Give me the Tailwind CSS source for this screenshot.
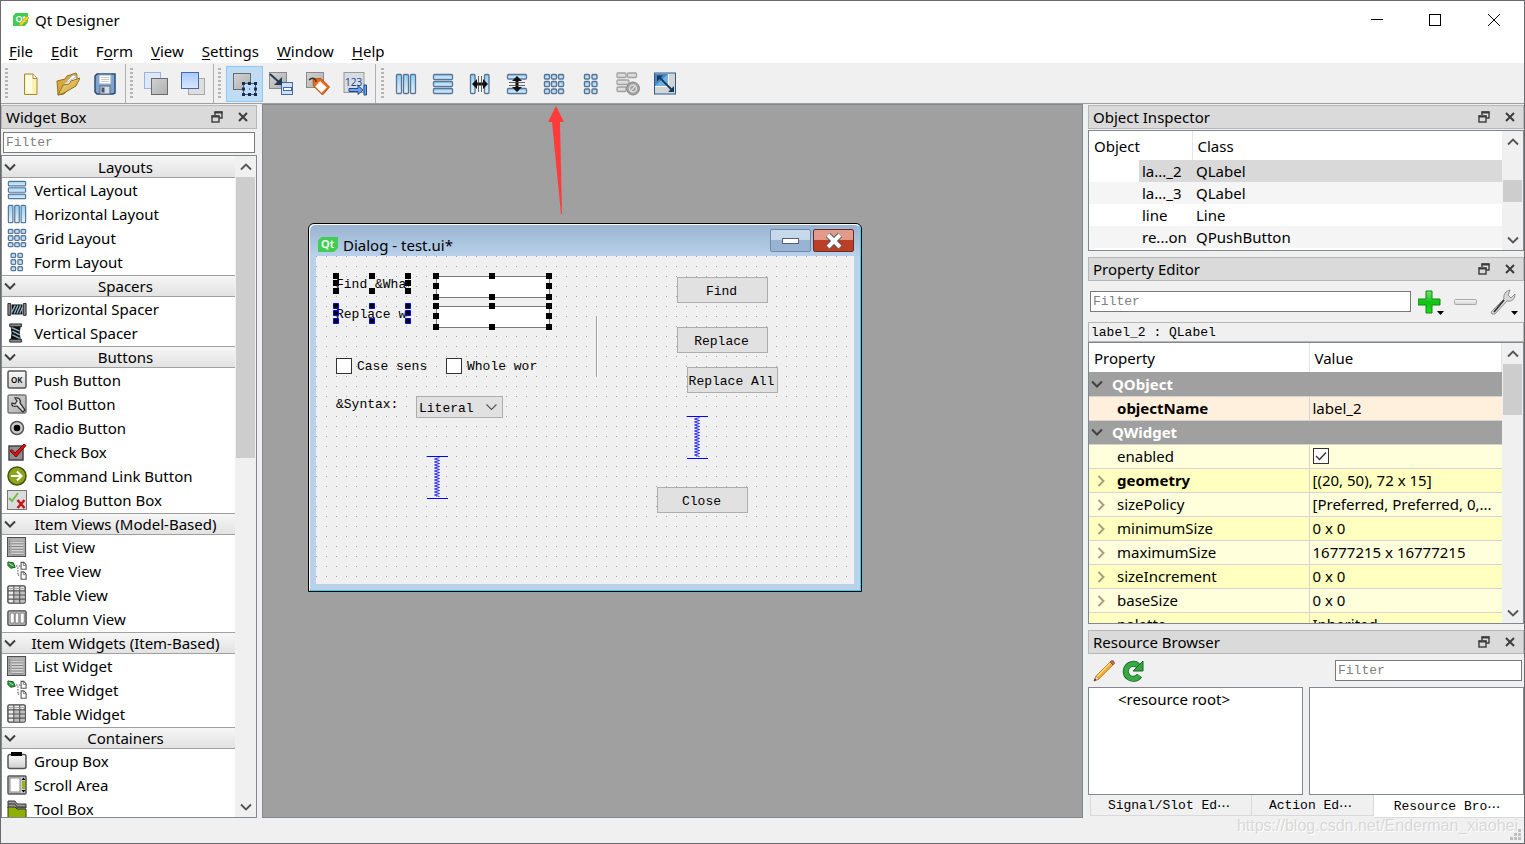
<!DOCTYPE html>
<html lang="en">
<head>
<meta charset="utf-8">
<title>Qt Designer</title>
<script src="https://cdn.jsdelivr.net/npm/@tailwindcss/browser@4"></script>
</head>
<body class="h-screen overflow-hidden bg-[#f0f0f0] font-['Noto_Sans',sans-serif] text-[15px] leading-5 text-black">

<!-- Shared icon symbols -->
<svg width="0" height="0" class="absolute" aria-hidden="true">
  <defs>
    <linearGradient id="gBlue" x1="0" y1="0" x2="0" y2="1"><stop offset="0" stop-color="#8fd0f5"/><stop offset="1" stop-color="#e4f3fd"/></linearGradient>
    <linearGradient id="gBlueD" x1="0" y1="0" x2="0" y2="1"><stop offset="0" stop-color="#a9c8fa"/><stop offset="1" stop-color="#d8e7ff"/></linearGradient>
    <linearGradient id="gGray" x1="0" y1="0" x2="1" y2="1"><stop offset="0" stop-color="#d2d2d2"/><stop offset="1" stop-color="#b0b0b0"/></linearGradient>
    <linearGradient id="gBtn" x1="0" y1="0" x2="0" y2="1"><stop offset="0" stop-color="#fafafa"/><stop offset="1" stop-color="#cfcfcf"/></linearGradient>
    <linearGradient id="gGreen" x1="0" y1="0" x2="0" y2="1"><stop offset="0" stop-color="#7be07b"/><stop offset=".5" stop-color="#12c212"/><stop offset="1" stop-color="#18e018"/></linearGradient>
    <linearGradient id="gGold" x1="0" y1="0" x2="1" y2="1"><stop offset="0" stop-color="#f7e08c"/><stop offset="1" stop-color="#c8962c"/></linearGradient>

    <symbol id="vbox" viewBox="0 0 22 22"><g fill="url(#gBlue)" stroke="#5a7396" stroke-width="1.3"><rect x="1.5" y="1.5" width="19" height="5" rx="1"/><rect x="1.5" y="8.5" width="19" height="5" rx="1"/><rect x="1.5" y="15.5" width="19" height="5" rx="1"/></g></symbol>
    <symbol id="hbox" viewBox="0 0 22 22"><g fill="url(#gBlue)" stroke="#5a7396" stroke-width="1.3"><rect x="1.5" y="1.5" width="5" height="19" rx="1"/><rect x="8.5" y="1.5" width="5" height="19" rx="1"/><rect x="15.5" y="1.5" width="5" height="19" rx="1"/></g></symbol>
    <symbol id="grid" viewBox="0 0 22 22"><g fill="url(#gBlue)" stroke="#5a7396" stroke-width="1.4"><rect x="1.5" y="1.5" width="5" height="4.500" rx="1"/><rect x="8.5" y="1.5" width="5" height="4.500" rx="1"/><rect x="15.5" y="1.5" width="5" height="4.500" rx="1"/><rect x="1.500" y="8.5" width="5" height="5" rx="1"/><rect x="8.5" y="8.5" width="5" height="5" rx="1"/><rect x="15.5" y="8.5" width="5" height="5" rx="1"/><rect x="1.5" y="16" width="5" height="4.500" rx="1"/><rect x="8.5" y="16" width="5" height="4.500" rx="1"/><rect x="15.5" y="16" width="5" height="4.500" rx="1"/></g></symbol>
    <symbol id="form" viewBox="0 0 22 22"><g fill="url(#gBlue)" stroke="#5a7396" stroke-width="1.4"><rect x="4.500" y="1.5" width="5" height="4.500" rx="1"/><rect x="12" y="1.5" width="5" height="4.500" rx="1"/><rect x="4.500" y="8.5" width="5" height="5" rx="1"/><rect x="12" y="8.5" width="5" height="5" rx="1"/><rect x="4.500" y="16" width="5" height="4.500" rx="1"/><rect x="12" y="16" width="5" height="4.500" rx="1"/></g></symbol>
    <symbol id="chev" viewBox="0 0 12 8"><path d="M1 1.500L6 6.500L11 1.500" fill="none" stroke="#404040" stroke-width="2"/></symbol>
    <symbol id="up" viewBox="0 0 12 8"><path d="M1 6.500L6 1.500L11 6.500" fill="none" stroke="#555" stroke-width="1.900"/></symbol>
    <symbol id="right" viewBox="0 0 8 12"><path d="M1.500 1L6.500 6L1.500 11" fill="none" stroke="#a0a082" stroke-width="1.900"/></symbol>
    <symbol id="float" viewBox="0 0 12 12"><path d="M4 4V1h7v6H8" fill="none" stroke="#3c3c3c" stroke-width="1.400"/><path d="M3.500 1.500h8" stroke="#3c3c3c" stroke-width="2"/><rect x="1" y="5" width="7" height="6" fill="#dadada" stroke="#3c3c3c" stroke-width="1.400"/><path d="M.5 5.500h8" stroke="#3c3c3c" stroke-width="2"/></symbol>
    <symbol id="x" viewBox="0 0 10 10"><path d="M1 1l8 8M9 1l-8 8" stroke="#3c3c3c" stroke-width="2"/></symbol>
    <symbol id="list" viewBox="0 0 22 22"><rect x=".5" y=".5" width="20" height="21" fill="#a8a8a8" stroke="#444"/><rect x="5" y="3" width="13" height="17" fill="#d4d4d4"/><path d="M5 4.500h13M5 7.500h13M5 10.500h13M5 13.500h13M5 16.500h13M5 19.500h13" stroke="#777"/><path d="M2 4.500h1M2 7.500h1M2 10.500h1M2 13.500h1M2 16.500h1" stroke="#444"/></symbol>
    <symbol id="tree" viewBox="0 0 22 22"><path d="M1 1l6 1 2 5-5 1-3-3z" fill="#2c9c3c" stroke="#154d1d"/><path d="M2 2.500l5 3" stroke="#b6e8b6"/><path d="M10 5.500h5M12 7v8M12 15.500h3" stroke="#333" stroke-dasharray="1.500 1.500"/><path d="M15.500 1.500h3l2.500 2.500V9h-5.500zM15.500 12h3l2.500 2.500V20h-5.500z" fill="#fff" stroke="#555" stroke-width="1.200"/><path d="M18 2v3h3M18 12v3h3" fill="none" stroke="#777"/></symbol>
    <symbol id="table" viewBox="0 0 22 22"><rect x="1" y="1" width="19" height="19" rx="1.500" fill="#eaeaea" stroke="#444" stroke-width="1.500"/><path d="M7.500 7h12v12h-12z" fill="#c0c0c0"/><path d="M1 6.500h19M1 11h19M1 15.500h19M7.500 1v19M14 1v19" stroke="#555" stroke-width="1.200"/><path d="M2 4h17" stroke="#999"/></symbol>
    <symbol id="column" viewBox="0 0 22 22"><rect x="1" y="2" width="20" height="16" rx="1.500" fill="#c4c4c4" stroke="#4a4a4a" stroke-width="1.500"/><path d="M3.500 4.500h4.500v11H3.500zM9 4.500h4v11H9zM14.500 4.500h4.500v11h-4.500z" fill="#fff" stroke="#777"/></symbol>
    <symbol id="vspring" viewBox="0 0 21 43"><path d="M0 .5h21M0 42.500h21" stroke="#00f"/><path d="M7.500 3l5-1.500M7.500 3l5 1.500M7.500 6l5-1.500M7.500 6l5 1.500M7.500 9l5-1.500M7.500 9l5 1.500M7.500 12l5-1.500M7.500 12l5 1.500M7.500 15l5-1.500M7.500 15l5 1.500M7.500 18l5-1.500M7.500 18l5 1.500M7.500 21l5-1.500M7.500 21l5 1.500M7.500 24l5-1.500M7.500 24l5 1.500M7.500 27l5-1.500M7.500 27l5 1.500M7.500 30l5-1.500M7.500 30l5 1.500M7.500 33l5-1.500M7.500 33l5 1.500M7.500 36l5-1.500M7.500 36l5 1.500M7.500 39l5-1.500M7.500 39l5 1.500" stroke="#00f" stroke-width=".8"/></symbol>
  </defs>
</svg>

<div class="flex h-full flex-col border border-[#6a6a6e]">

  <!-- Title bar -->
  <header class="flex h-[37px] shrink-0 items-center bg-white pl-[11px]">
    <svg class="h-4 w-[17px]" viewBox="0 0 17 16"><path d="M3.500 1H16v9l-3 4H1V4z" fill="#41cd52"/><text x="3.500" y="10" font-family="Noto Sans" font-size="9" font-weight="600" fill="#fff">Qt</text><path d="M7 14l1-3 7-7 2 2-7 7z" fill="#f4cf2a" stroke="#c9a51c" stroke-width=".6"/></svg>
    <h1 class="ml-1.5 flex-1">Qt Designer</h1>
    <button class="grid h-9 w-[58px] place-items-center" aria-label="Minimize"><svg class="size-3" viewBox="0 0 12 12"><path d="M0 5.500h12" stroke="#000"/></svg></button>
    <button class="grid h-9 w-[58px] place-items-center" aria-label="Maximize"><svg class="size-3" viewBox="0 0 12 12"><rect x=".5" y=".5" width="11" height="11" fill="none" stroke="#000"/></svg></button>
    <button class="grid h-9 w-[60px] place-items-center" aria-label="Close"><svg class="size-3" viewBox="0 0 12 12"><path d="M0 0l12 12M12 0L0 12" stroke="#000"/></svg></button>
  </header>

  <!-- Menu bar -->
  <nav class="flex h-[26px] shrink-0 items-center gap-[18px] border-b border-[#f0f0f0] bg-white pl-2">
    <button><u class="underline-offset-2">F</u>ile</button>
    <button><u class="underline-offset-2">E</u>dit</button>
    <button>F<u class="underline-offset-2">o</u>rm</button>
    <button><u class="underline-offset-2">V</u>iew</button>
    <button><u class="underline-offset-2">S</u>ettings</button>
    <button><u class="underline-offset-2">W</u>indow</button>
    <button><u class="underline-offset-2">H</u>elp</button>
  </nav>

  <!-- Tool bars -->
  <div class="flex h-[40px] shrink-0 border-b border-[#a0a0a0]" role="toolbar">
    <div class="flex items-center border-r border-[#b0b0b0] pr-0.5 pl-1">
      <span class="mr-1 h-8 w-[3px] bg-[repeating-linear-gradient(to_bottom,#b4b4b4_0_2px,transparent_2px_4px)]"></span>
      <button class="grid h-9 w-[37px] place-items-center" aria-label="New"><svg class="size-6" viewBox="0 0 24 24"><path d="M5.500 2h8.500l4 4v16.500H5.500z" fill="#fdf3b0" stroke="#a38b3a"/><path d="M7 3.500h6v17H7z" fill="#fffce4"/><path d="M14 2v4.500h4" fill="#fff" stroke="#a38b3a"/></svg></button>
      <button class="grid h-9 w-[37px] place-items-center" aria-label="Open"><svg class="size-6" viewBox="0 0 24 24"><path d="M1 9l8-2 2-3 9-3 1 2v6L8 22l-6 1z" fill="#d8a93c" stroke="#93701d"/><path d="M6 14L17 3l3 1 1 5-10 8z" fill="#fff" stroke="#b5b5b5"/><path d="M8 12L20 5" stroke="#bbb"/><path d="M2 23l5-10 6-1 2-3 9-3-4 8L8 21z" fill="url(#gGold)" stroke="#93701d"/></svg></button>
      <button class="grid h-9 w-[37px] place-items-center" aria-label="Save"><svg class="size-6" viewBox="0 0 24 24"><path d="M4 2h18v19l-2 1H4L2 20V4z" fill="#7ea5cf" stroke="#294c73" stroke-width="1.500"/><rect x="6" y="3" width="12" height="9" fill="#fff" stroke="#9ab"/><path d="M8 5.500h8M8 7.500h8M8 9.500h8" stroke="#c8ccd2"/><rect x="7" y="14" width="10" height="8" fill="#d9dde1" stroke="#506a86"/><rect x="8.500" y="15.500" width="3" height="5" fill="#47566a"/></svg></button>
    </div>
    <div class="flex items-center border-r border-[#b0b0b0] pr-0.5 pl-1">
      <span class="mr-1 h-8 w-[3px] bg-[repeating-linear-gradient(to_bottom,#b4b4b4_0_2px,transparent_2px_4px)]"></span>
      <button class="grid h-9 w-[37px] place-items-center" aria-label="Send to back"><svg class="size-6" viewBox="0 0 24 24"><rect x=".5" y=".5" width="16" height="16" fill="#dce8fb" stroke="#9db4d8"/><rect x="7.500" y="6.500" width="16" height="16" fill="url(#gGray)" stroke="#6a6a6a"/></svg></button>
      <button class="grid h-9 w-[37px] place-items-center" aria-label="Bring to front"><svg class="size-6" viewBox="0 0 24 24"><rect x="7.500" y="6.500" width="16" height="16" fill="#dedede" stroke="#a8a8a8"/><rect x=".5" y=".5" width="17" height="16" fill="url(#gBlueD)" stroke="#4668a4"/></svg></button>
    </div>
    <div class="flex items-center border-r border-[#b0b0b0] pr-0.5 pl-1">
      <span class="mr-[5px] h-8 w-[3px] bg-[repeating-linear-gradient(to_bottom,#b4b4b4_0_2px,transparent_2px_4px)]"></span>
      <button class="grid h-9 w-[37px] place-items-center border border-[#90c8f6] bg-[#c0dcf3]" aria-label="Edit widgets" aria-pressed="true"><svg class="size-6" viewBox="0 0 24 24"><rect x=".5" y="1.500" width="17" height="16" fill="url(#gGray)" stroke="#6a6a6a"/><rect x="10.500" y="11.500" width="12" height="11" fill="#c3dbfa" stroke="#3a6196"/><path d="M9 10h3v3H9zM15 10h3v3h-3zM21 10h3v3h-3zM9 15.500h3v3H9zM21 15.500h3v3h-3zM9 21h3v3H9zM15 21h3v3h-3zM21 21h3v3h-3z" fill="#1c2c4c"/><path d="M16 16.500h1v1h-1z" fill="#1c2c4c"/></svg></button>
      <button class="grid h-9 w-9 place-items-center" aria-label="Edit signals and slots"><svg class="size-6" viewBox="0 0 24 24"><rect x=".5" y=".5" width="17" height="16" fill="url(#gGray)" stroke="#8a8a8a"/><rect x="12.500" y="10.500" width="11" height="12" fill="#cfe0fb" stroke="#4668a4"/><rect x="14.500" y="15.500" width="8" height="3" fill="#fff" stroke="#3d69b5"/><path d="M1 2l10 9" stroke="#233c55" stroke-width="2"/><path d="M13 5v8H5z" fill="#233c55"/></svg></button>
      <button class="grid h-9 w-[37px] place-items-center" aria-label="Edit buddies"><svg class="size-6" viewBox="0 0 24 24"><rect x=".5" y=".5" width="17" height="15" fill="url(#gGray)" stroke="#8a8a8a"/><path d="M7 7l8-.5 8.500 8.500-7 8-9-9z" fill="#e76b1f" stroke="#b64d10"/><path d="M14 9.500l6.500 6-5 5-6-6z" fill="#fff" stroke="#fbd6b8"/><path d="M3 8c3-3 7-2 7 2" fill="none" stroke="#333" stroke-width="1.300"/></svg></button>
      <button class="grid h-9 w-[37px] place-items-center" aria-label="Edit tab order"><svg class="size-6" viewBox="0 0 24 24"><rect x="1" y=".5" width="20" height="20" fill="#d9dce0" stroke="#9a9a9a"/><text x="2" y="14" font-family="Noto Sans" font-size="10" fill="#1c4c93">123</text><path d="M6 16.500h9v-3l5 4.500-5 4.500v-3H6z" fill="#6fa3e6" stroke="#1e4b8c"/><path d="M21 13h2.500v10H21z" fill="#6fa3e6" stroke="#1e4b8c"/></svg></button>
    </div>
    <div class="flex items-center pl-[5px]">
      <span class="mr-[3px] h-8 w-[3px] bg-[repeating-linear-gradient(to_bottom,#b4b4b4_0_2px,transparent_2px_4px)]"></span>
      <button class="grid h-9 w-[37px] place-items-center" aria-label="Lay out horizontally"><svg class="size-[22px]"><use href="#hbox"/></svg></button>
      <button class="grid h-9 w-[37px] place-items-center" aria-label="Lay out vertically"><svg class="size-[22px]"><use href="#vbox"/></svg></button>
      <button class="grid h-9 w-[37px] place-items-center" aria-label="Horizontal splitter"><svg class="size-[22px]" viewBox="0 0 22 22"><g fill="url(#gBlue)" stroke="#5a7396" stroke-width="1.300"><rect x="1.500" y="1.500" width="4.500" height="19" rx="1"/><rect x="15.500" y="1.500" width="4.500" height="19" rx="1"/></g><path d="M3 11l5-5v3.500h6V6l5 5-5 5v-3.500H8V16z" fill="#111"/><path d="M9.500 3v16M12.500 3v16" stroke="#444" stroke-width=".8"/></svg></button>
      <button class="grid h-9 w-[37px] place-items-center" aria-label="Vertical splitter"><svg class="size-[22px]" viewBox="0 0 22 22"><g fill="url(#gBlue)" stroke="#5a7396" stroke-width="1.300"><rect x="1.500" y="1.500" width="19" height="4.500" rx="1"/><rect x="1.500" y="15.500" width="19" height="5" rx="1"/></g><path d="M11 3l5 5h-3.500v6H16l-5 5-5-5h3.500V8H6z" fill="#111"/><path d="M3 9.500h16M3 12.500h16" stroke="#444" stroke-width=".8"/></svg></button>
      <button class="grid h-9 w-[37px] place-items-center" aria-label="Lay out in a grid"><svg class="size-[22px]"><use href="#grid"/></svg></button>
      <button class="grid h-9 w-[37px] place-items-center" aria-label="Lay out in a form"><svg class="size-[22px]"><use href="#form"/></svg></button>
      <button class="grid h-9 w-[37px] place-items-center" aria-label="Break layout"><svg class="size-6" viewBox="0 0 24 24"><g fill="#ddd" stroke="#a0a0a0" stroke-width="1.300"><rect x="1" y="1" width="9" height="4.500" rx="1"/><rect x="11.500" y="1" width="9" height="4.500" rx="1"/><rect x="1" y="8" width="12" height="4.500" rx="1"/><rect x="1" y="15" width="9" height="4.500" rx="1"/></g><circle cx="17" cy="16.500" r="6.500" fill="#a0a0a0" stroke="#8a8a8a"/><circle cx="17" cy="16.500" r="3.500" fill="none" stroke="#dadada" stroke-width="1.500"/><path d="M14.500 19l5-5" stroke="#dadada" stroke-width="1.500"/></svg></button>
      <button class="grid h-9 w-[37px] place-items-center" aria-label="Adjust size"><svg class="size-6" viewBox="0 0 24 24"><rect x="1.500" y="1" width="21" height="21" fill="#d4d4d4" stroke="#2d5c8e"/><rect x="2" y="2" width="13" height="12" fill="#6fb3e0"/><path d="M2 2h13L2 14z" fill="#4a86c4"/><path d="M15.500 2v12.500H2" fill="none" stroke="#f4f4f4"/><path d="M6 5l13 13" stroke="#163a5c" stroke-width="1.800"/><path d="M4 3.500h6l-6 6zM21 20h-6l6-6z" fill="#163a5c"/></svg></button>
    </div>
  </div>

  <!-- Work area -->
  <main class="flex min-h-0 flex-1">

    <!-- Widget box -->
    <aside class="flex w-64 shrink-0 flex-col pt-px">
      <div class="flex h-6 shrink-0 items-center border border-[#b6b6b6] bg-[#dadada] pr-2 pl-1">
        <h2 class="flex-1">Widget Box</h2>
        <button aria-label="Float"><svg class="size-3"><use href="#float"/></svg></button>
        <button class="ml-[15px]" aria-label="Close"><svg class="size-2.5"><use href="#x"/></svg></button>
      </div>
      <input type="text" aria-label="Filter widgets" placeholder="Filter" class="mx-0.5 mt-[3px] h-[21px] shrink-0 border border-[#7a7a7a] bg-white px-0.5 font-['Liberation_Mono',monospace] text-[13px] placeholder-[#808080]">
      <div class="mt-0.5 flex min-h-0 flex-1 border border-[#828790] bg-white">
        <div class="min-w-0 flex-1 overflow-hidden">
          <section class="pb-px">
            <h3 class="flex h-[22px] items-center border-b border-[#a0a0a0] bg-linear-to-b from-[#f6f6f6] to-[#e2e2e2] pl-0.5"><svg class="h-2 w-3"><use href="#chev"/></svg><span class="flex-1 text-center">Layouts</span></h3>
            <ul>
              <li class="flex h-6 items-center gap-[7px] pl-[5px]"><svg class="size-5"><use href="#vbox"/></svg>Vertical Layout</li>
              <li class="flex h-6 items-center gap-[7px] pl-[5px]"><svg class="size-5"><use href="#hbox"/></svg>Horizontal Layout</li>
              <li class="flex h-6 items-center gap-[7px] pl-[5px]"><svg class="size-5"><use href="#grid"/></svg>Grid Layout</li>
              <li class="flex h-6 items-center gap-[7px] pl-[5px]"><svg class="size-5"><use href="#form"/></svg>Form Layout</li>
            </ul>
          </section>
          <section class="pb-px">
            <h3 class="flex h-[22px] items-center border-y border-[#a0a0a0] bg-linear-to-b from-[#f6f6f6] to-[#e2e2e2] pl-0.5"><svg class="h-2 w-3"><use href="#chev"/></svg><span class="flex-1 text-center">Spacers</span></h3>
            <ul>
              <li class="flex h-6 items-center gap-[7px] pl-[5px]"><svg class="size-5" viewBox="0 0 22 22"><path d="M1 5h3v13H1zM18 5h3v13h-3z" fill="#888" stroke="#222"/><path d="M5 6h12v11H5z" fill="#111"/><path d="M5 15l4-8M8 16l4-9M11 16l4-9M14 16l3-7" stroke="#8fb6c8" stroke-width="1.500"/></svg>Horizontal Spacer</li>
              <li class="flex h-6 items-center gap-[7px] pl-[5px]"><svg class="size-5" viewBox="0 0 22 22"><path d="M3 1h13v3H3zM3 18h13v3H3z" fill="#888" stroke="#222"/><path d="M4 4h11l-1 7 1 7H4l1-7z" fill="#111"/><path d="M5 5l9 4M6 9l8 4M6 13l8 4" stroke="#8fb6c8" stroke-width="1.500"/></svg>Vertical Spacer</li>
            </ul>
          </section>
          <section class="pb-px">
            <h3 class="flex h-[22px] items-center border-y border-[#a0a0a0] bg-linear-to-b from-[#f6f6f6] to-[#e2e2e2] pl-0.5"><svg class="h-2 w-3"><use href="#chev"/></svg><span class="flex-1 text-center">Buttons</span></h3>
            <ul>
              <li class="flex h-6 items-center gap-[7px] pl-[5px]"><svg class="size-5" viewBox="0 0 20 20"><rect x="1" y="1" width="18" height="17" rx="1.500" fill="url(#gBtn)" stroke="#555" stroke-width="1.500"/><text x="4" y="12.500" font-family="Noto Sans" font-size="8" font-weight="600">OK</text></svg>Push Button</li>
              <li class="flex h-6 items-center gap-[7px] pl-[5px]"><svg class="size-5" viewBox="0 0 20 20"><rect x="1" y="1" width="18" height="18" rx="1.500" fill="url(#gGray)" stroke="#777" stroke-width="1.500"/><path d="M8 4c4-1 6 2 5 5l5 7-2 2-6-6c-3 1-6 0-5-3l3 1 2-3z" fill="#ddd" stroke="#333" stroke-width="1.300"/></svg>Tool Button</li>
              <li class="flex h-6 items-center gap-[7px] pl-[5px]"><svg class="size-5" viewBox="0 0 20 20"><circle cx="10" cy="10" r="6.500" fill="#ccc" stroke="#555" stroke-width="1.500"/><circle cx="10" cy="10" r="3.300"/></svg>Radio Button</li>
              <li class="flex h-6 items-center gap-[7px] pl-[5px]"><svg class="size-5" viewBox="0 0 20 20"><rect x="2" y="4" width="14" height="14" fill="#8e8e8e" stroke="#444" stroke-width="1.500"/><path d="M3 9l2-1.500 3 3.500L17 2l2 1.500L9 15z" fill="#d41414" stroke="#7d0a0a"/></svg>Check Box</li>
              <li class="flex h-6 items-center gap-[7px] pl-[5px]"><svg class="size-5" viewBox="0 0 20 20"><circle cx="10" cy="10" r="9" fill="#8aa51d" stroke="#46540d" stroke-width="1.500"/><path d="M4 10h10M10 5.500l4.500 4.500-4.500 4.500" fill="none" stroke="#fff" stroke-width="2"/></svg>Command Link Button</li>
              <li class="flex h-6 items-center gap-[7px] pl-[5px]"><svg class="size-5" viewBox="0 0 20 20"><rect x=".5" y=".5" width="19" height="19" fill="#dcdcdc" stroke="#777"/><path d="M2 8l3 3 6-8" fill="none" stroke="#6cc04a" stroke-width="2"/><path d="M10.500 10l7 8M17.500 10l-7 8" stroke="#c4161c" stroke-width="2.500"/></svg>Dialog Button Box</li>
            </ul>
          </section>
          <section class="pb-px">
            <h3 class="flex h-[22px] items-center border-y border-[#a0a0a0] bg-linear-to-b from-[#f6f6f6] to-[#e2e2e2] pl-0.5"><svg class="h-2 w-3"><use href="#chev"/></svg><span class="flex-1 text-center">Item Views (Model-Based)</span></h3>
            <ul>
              <li class="flex h-6 items-center gap-[7px] pl-[5px]"><svg class="size-5"><use href="#list"/></svg>List View</li>
              <li class="flex h-6 items-center gap-[7px] pl-[5px]"><svg class="size-5"><use href="#tree"/></svg>Tree View</li>
              <li class="flex h-6 items-center gap-[7px] pl-[5px]"><svg class="size-5"><use href="#table"/></svg>Table View</li>
              <li class="flex h-6 items-center gap-[7px] pl-[5px]"><svg class="size-5"><use href="#column"/></svg>Column View</li>
            </ul>
          </section>
          <section class="pb-px">
            <h3 class="flex h-[22px] items-center border-y border-[#a0a0a0] bg-linear-to-b from-[#f6f6f6] to-[#e2e2e2] pl-0.5"><svg class="h-2 w-3"><use href="#chev"/></svg><span class="flex-1 text-center">Item Widgets (Item-Based)</span></h3>
            <ul>
              <li class="flex h-6 items-center gap-[7px] pl-[5px]"><svg class="size-5"><use href="#list"/></svg>List Widget</li>
              <li class="flex h-6 items-center gap-[7px] pl-[5px]"><svg class="size-5"><use href="#tree"/></svg>Tree Widget</li>
              <li class="flex h-6 items-center gap-[7px] pl-[5px]"><svg class="size-5"><use href="#table"/></svg>Table Widget</li>
            </ul>
          </section>
          <section>
            <h3 class="flex h-[22px] items-center border-y border-[#a0a0a0] bg-linear-to-b from-[#f6f6f6] to-[#e2e2e2] pl-0.5"><svg class="h-2 w-3"><use href="#chev"/></svg><span class="flex-1 text-center">Containers</span></h3>
            <ul>
              <li class="flex h-6 items-center gap-[7px] pl-[5px]"><svg class="size-5" viewBox="0 0 20 20"><rect x="1" y="3.500" width="18" height="14" rx="2" fill="url(#gBtn)" stroke="#555" stroke-width="1.500"/><rect x="4" y="1" width="11" height="4" fill="#000"/></svg>Group Box</li>
              <li class="flex h-6 items-center gap-[7px] pl-[5px]"><svg class="size-5" viewBox="0 0 20 20"><rect x="1" y="1" width="18" height="18" rx="1" fill="#ccc" stroke="#555" stroke-width="1.500"/><rect x="3" y="3" width="10" height="14" fill="#fff" stroke="#888"/><rect x="15" y="6" width="3" height="8" fill="#95b800"/><path d="M14.500 5l2-2.500 2 2.500zM14.500 15l2 2.500 2-2.500z"/></svg>Scroll Area</li>
              <li class="flex h-6 items-center gap-[7px] pl-[5px]"><svg class="size-5" viewBox="0 0 20 20"><path d="M1 2h7l2 3h9v4H1z" fill="#999" stroke="#333"/><path d="M1 5h7l2 3h9" fill="none" stroke="#333"/><path d="M1 8h7l2 2h9v10H1z" fill="#8fb000" stroke="#333"/></svg>Tool Box</li>
            </ul>
          </section>
        </div>
        <div class="flex w-[21px] shrink-0 flex-col items-center bg-[#f0f0f0]">
          <span class="grid h-[21px] place-items-center"><svg class="h-2 w-3"><use href="#up"/></svg></span>
          <span class="h-[281px] w-[19px] bg-[#cdcdcd]"></span>
          <span class="mt-auto grid h-[21px] place-items-center"><svg class="h-2 w-3 rotate-180"><use href="#up"/></svg></span>
        </div>
      </div>
    </aside>

    <!-- Form canvas -->
    <div class="relative mx-[5px] min-w-0 flex-1 overflow-hidden border border-[#828790] bg-[#a0a0a0]">
      <svg class="absolute top-px left-[284px] h-[109px] w-[18px]" viewBox="0 0 18 109"><path d="M9 0l8 16h-4l2 92h-1L5 16H1z" fill="#ff3b3b"/></svg>

      <!-- Edited dialog -->
      <div class="absolute top-[118px] left-[45px] flex h-[369px] w-[554px] flex-col rounded-t-md border border-black bg-[#b9d1ea]">
        <div class="flex min-h-0 flex-1 flex-col rounded-t-md border border-t-white border-r-[#2ed3f0] border-b-[#2ed3f0] border-l-white px-1.5 pb-1.5">
          <div class="-mx-1.5 flex h-[31px] shrink-0 items-center rounded-t-md bg-linear-to-b from-[#99b4d1] to-[#b9d1ea] px-1.5">
            <svg class="mt-2 ml-0.5 h-[15px] w-5" viewBox="0 0 20 15"><path d="M3.500 0H20v11l-4 4H0V3.500z" fill="#41cd52"/><text x="3" y="11" font-family="Noto Sans" font-size="11" font-weight="600" fill="#fff">Qt</text></svg>
            <span class="mt-2 ml-[5px] flex-1">Dialog - test.ui*</span>
            <button class="mr-0.5 grid h-[23px] w-[41px] place-items-center rounded-xs border border-[#6d8aab] bg-linear-to-b from-[#c6d8ea] from-45% to-[#98b4d2] to-50%" aria-label="Minimize dialog"><span class="h-1.5 w-[17px] border border-[#555f70] bg-white"></span></button>
            <button class="grid h-[23px] w-[41px] place-items-center rounded-xs border border-[#6c2a22] bg-linear-to-b from-[#e29a8b] from-45% to-[#ba3f26] to-50%" aria-label="Close dialog"><svg class="h-4 w-[18px]" viewBox="0 0 18 16"><path d="M3 2l12 12M15 2L3 14" stroke="#54505c" stroke-width="6"/><path d="M3 2l12 12M15 2L3 14" stroke="#fff" stroke-width="4"/></svg></button>
          </div>
          <div class="relative min-h-0 flex-1 overflow-hidden bg-[#f0f0f0] font-['Liberation_Mono',monospace] text-[13px]">
            <svg class="absolute inset-0 h-full w-full" aria-hidden="true"><defs><pattern id="dots" width="10" height="10" patternUnits="userSpaceOnUse"><rect width="1" height="1" fill="#a0a0a0"/></pattern></defs><rect width="100%" height="100%" fill="url(#dots)"/></svg>

            <label for="find" class="absolute top-[19px] left-5 w-[73px] overflow-hidden whitespace-nowrap">Find &amp;What</label>
            <label for="repl" class="absolute top-[49px] left-5 w-[71px] overflow-hidden whitespace-nowrap">Replace with</label>
            <input id="find" type="text" class="absolute top-5 left-[120px] h-[22px] w-[114px] border border-[#7a7a7a] bg-white">
            <input id="repl" type="text" class="absolute top-[50px] left-[120px] h-[22px] w-[114px] border border-[#7a7a7a] bg-white">
            <svg class="absolute top-4 left-4 h-[58px] w-[222px]" viewBox="0 0 222 58" aria-hidden="true">
              <path d="M1 1h6v6h-6zM37 1h6v6h-6zM73 1h6v6h-6zM1 8h6v6h-6zM73 8h6v6h-6zM1 16h6v6h-6zM37 16h6v6h-6zM73 16h6v6h-6z"/>
              <g fill="#000" stroke="#00f"><path d="M1.500 31.500h5v5h-5zM37.500 31.500h5v5h-5zM73.500 31.500h5v5h-5zM1.500 38.500h5v5h-5zM73.500 38.500h5v5h-5zM1.500 46.500h5v5h-5zM37.500 46.500h5v5h-5zM73.500 46.500h5v5h-5z"/></g>
              <path d="M101 1h6v6h-6zM157 1h6v6h-6zM214 1h6v6h-6zM101 11h6v6h-6zM214 11h6v6h-6zM101 22h6v6h-6zM157 22h6v6h-6zM214 22h6v6h-6z"/>
              <path d="M101 31h6v6h-6zM157 31h6v6h-6zM214 31h6v6h-6zM101 41h6v6h-6zM214 41h6v6h-6zM101 52h6v6h-6zM157 52h6v6h-6zM214 52h6v6h-6z"/>
            </svg>
            <span class="absolute top-[60px] left-[280px] h-[61px] w-0.5 border-r border-l border-r-white border-l-[#a0a0a0]"></span>

            <label class="absolute top-[99px] left-5 flex w-[91px] items-center gap-[5px] overflow-hidden whitespace-nowrap"><input type="checkbox" class="size-4 shrink-0 appearance-none border border-[#333] bg-white"><span class="pt-0.5">Case sensitive</span></label>
            <label class="absolute top-[99px] left-[130px] flex w-[91px] items-center gap-[5px] overflow-hidden whitespace-nowrap"><input type="checkbox" class="size-4 shrink-0 appearance-none border border-[#333] bg-white"><span class="pt-0.5">Whole words</span></label>

            <label for="syntax" class="absolute top-[139px] left-5">&amp;Syntax:</label>
            <select id="syntax" class="absolute top-[140px] left-[100px] h-[22px] w-[87px] appearance-none border border-[#adadad] bg-[#e1e1e1] pt-0.5 pl-0.5"><option>Literal</option></select>
            <svg class="pointer-events-none absolute top-[148px] left-[170px] h-[7px] w-[11px]" viewBox="0 0 11 7"><path d="M.5 .5l5 5 5-5" fill="none" stroke="#555" stroke-width="1.200"/></svg>

            <button class="absolute top-[21px] left-[361px] h-[26px] w-[91px] border border-[#adadad] bg-[#e1e1e1] pt-[3px] pr-0.5">Find</button>
            <button class="absolute top-[71px] left-[361px] h-[26px] w-[91px] border border-[#adadad] bg-[#e1e1e1] pt-[3px] pr-0.5">Replace</button>
            <button class="absolute top-[111px] left-[371px] h-[26px] w-[91px] border border-[#adadad] bg-[#e1e1e1] pt-[3px] pr-0.5 whitespace-nowrap">Replace All</button>
            <button class="absolute top-[231px] left-[341px] h-[26px] w-[91px] border border-[#adadad] bg-[#e1e1e1] pt-[3px] pr-0.5">Close</button>

            <svg class="absolute top-[160px] left-[371px] h-[43px] w-[21px]"><use href="#vspring"/></svg>
            <svg class="absolute top-[200px] left-[111px] h-[43px] w-[21px]"><use href="#vspring"/></svg>
          </div>
        </div>
      </div>
    </div>

    <!-- Right docks -->
    <aside class="flex w-[436px] shrink-0 flex-col gap-1.5 pt-px">

      <section class="shrink-0">
        <div class="flex h-6 items-center border border-[#b6b6b6] bg-[#dadada] pr-2 pl-1">
          <h2 class="flex-1">Object Inspector</h2>
          <button aria-label="Float"><svg class="size-3"><use href="#float"/></svg></button>
          <button class="ml-[15px]" aria-label="Close"><svg class="size-2.5"><use href="#x"/></svg></button>
        </div>
        <div class="mt-px flex h-[121px] border border-[#828790] bg-white">
          <table class="h-[117px] flex-1 table-fixed border-collapse">
            <thead><tr class="h-[29px] text-left"><th class="w-[103px] border-r border-[#e5e5e5] pl-[5px] font-normal">Object</th><th class="pl-[5px] font-normal">Class</th></tr></thead>
            <tbody>
              <tr class="h-[22px] bg-linear-to-r from-white from-[50px] to-[#d9d9d9] to-[50px]"><td class="pl-[53px]">la..._2</td><td class="pl-1">QLabel</td></tr>
              <tr class="h-[22px] bg-[#f5f5f5]"><td class="pl-[53px]">la..._3</td><td class="pl-1">QLabel</td></tr>
              <tr class="h-[22px]"><td class="pl-[53px]">line</td><td class="pl-1">Line</td></tr>
              <tr class="h-[22px] bg-[#f5f5f5]"><td class="pl-[53px] whitespace-nowrap">re...on</td><td class="pl-1">QPushButton</td></tr>
            </tbody>
          </table>
          <div class="flex w-[21px] shrink-0 flex-col items-center bg-[#f0f0f0]">
            <span class="grid h-[21px] place-items-center"><svg class="h-2 w-3"><use href="#up"/></svg></span>
            <span class="mt-7 h-[22px] w-[19px] bg-[#cdcdcd]"></span>
            <span class="mt-auto grid h-[21px] place-items-center"><svg class="h-2 w-3 rotate-180"><use href="#up"/></svg></span>
          </div>
        </div>
      </section>

      <section class="flex min-h-0 flex-1 flex-col">
        <div class="flex h-6 shrink-0 items-center border border-[#b6b6b6] bg-[#dadada] pr-2 pl-1">
          <h2 class="flex-1">Property Editor</h2>
          <button aria-label="Float"><svg class="size-3"><use href="#float"/></svg></button>
          <button class="ml-[15px]" aria-label="Close"><svg class="size-2.5"><use href="#x"/></svg></button>
        </div>
        <div class="flex h-[41px] shrink-0 items-center pl-0.5">
          <input type="text" aria-label="Filter properties" placeholder="Filter" class="h-[21px] min-w-0 flex-1 border border-[#7a7a7a] bg-white px-0.5 font-['Liberation_Mono',monospace] text-[13px] placeholder-[#808080]">
          <button class="ml-[7px]" aria-label="Add property"><svg class="h-7 w-[30px]" viewBox="0 0 30 28"><path d="M8 3h6v8h8v6h-8v8H8v-8H0v-6h8z" fill="url(#gGreen)" stroke="#0a8a12"/><path d="M19 23h7l-3.500 4z"/></svg></button>
          <button class="ml-1.5" aria-label="Remove property"><svg class="h-7 w-6" viewBox="0 0 24 28"><rect x=".5" y="11.500" width="22" height="5" rx="1" fill="url(#gBtn)" stroke="#a8a8a8"/></svg></button>
          <button class="mr-1.5 ml-3" aria-label="Configure"><svg class="h-7 w-7" viewBox="0 0 28 28"><path d="M2 26l-1-2L14 11c-1-5 2-8 6-9l-2 5 3 3 4-4c0 5-3 8-8 7L5 26z" fill="#d8d8d8" stroke="#777" stroke-width=".8"/><path d="M4 24L14 12" stroke="#333" stroke-width="1.800"/><path d="M21 23h7l-3.500 4z"/></svg></button>
        </div>
        <div class="h-5 shrink-0 border border-[#b6b6b6] pl-0.5 font-['Liberation_Mono',monospace] text-[13px]">label_2 : QLabel</div>
        <div class="flex min-h-0 flex-1 border border-[#828790] bg-white">
          <div class="min-w-0 flex-1 overflow-hidden">
            <table class="w-full table-fixed border-collapse whitespace-nowrap">
              <thead><tr class="h-[29px] text-left"><th class="w-[220px] border-r border-[#e5e5e5] pl-[5px] font-normal">Property</th><th class="border-r border-[#e5e5e5] pl-[5px] font-normal">Value</th></tr></thead>
              <tbody>
                <tr class="h-6 border-b border-[#d4d4d4] bg-[#a0a0a0]"><th colspan="2" class="pl-0.5 text-left font-bold text-white"><svg class="mr-[9px] inline h-2 w-3 -translate-y-0.5"><use href="#chev"/></svg>QObject</th></tr>
                <tr class="h-6 border-b border-[#d4d4d4] bg-[#ffefdd]"><td class="border-r border-[#d4d4d4] pl-7 font-bold">objectName</td><td class="pl-[3px]">label_2</td></tr>
                <tr class="h-6 border-b border-[#d4d4d4] bg-[#a0a0a0]"><th colspan="2" class="pl-0.5 text-left font-bold text-white"><svg class="mr-[9px] inline h-2 w-3 -translate-y-0.5"><use href="#chev"/></svg>QWidget</th></tr>
                <tr class="h-6 border-b border-[#d4d4d4] bg-[#ffffdc]"><td class="border-r border-[#d4d4d4] pl-7">enabled</td><td class="pl-[3px]"><span class="relative grid size-4"><input type="checkbox" checked aria-label="enabled" class="size-4 appearance-none border border-[#333] bg-white"><svg class="pointer-events-none absolute inset-0 size-4" viewBox="0 0 16 16"><path d="M3 8l3.500 3.500L13 4.500" fill="none" stroke="#333" stroke-width="1.400"/></svg></span></td></tr>
                <tr class="h-6 border-b border-[#d4d4d4] bg-[#ffffbf]"><td class="border-r border-[#d4d4d4] pl-2 font-bold"><svg class="mr-3 inline h-3 w-2 -translate-y-px"><use href="#right"/></svg>geometry</td><td class="pl-[3px]">[(20, 50), 72 x 15]</td></tr>
                <tr class="h-6 border-b border-[#d4d4d4] bg-[#ffffdc]"><td class="border-r border-[#d4d4d4] pl-2"><svg class="mr-3 inline h-3 w-2 -translate-y-px"><use href="#right"/></svg>sizePolicy</td><td class="pl-[3px]">[Preferred, Preferred, 0,...</td></tr>
                <tr class="h-6 border-b border-[#d4d4d4] bg-[#ffffbf]"><td class="border-r border-[#d4d4d4] pl-2"><svg class="mr-3 inline h-3 w-2 -translate-y-px"><use href="#right"/></svg>minimumSize</td><td class="pl-[3px]">0 x 0</td></tr>
                <tr class="h-6 border-b border-[#d4d4d4] bg-[#ffffdc]"><td class="border-r border-[#d4d4d4] pl-2"><svg class="mr-3 inline h-3 w-2 -translate-y-px"><use href="#right"/></svg>maximumSize</td><td class="pl-[3px]">16777215 x 16777215</td></tr>
                <tr class="h-6 border-b border-[#d4d4d4] bg-[#ffffbf]"><td class="border-r border-[#d4d4d4] pl-2"><svg class="mr-3 inline h-3 w-2 -translate-y-px"><use href="#right"/></svg>sizeIncrement</td><td class="pl-[3px]">0 x 0</td></tr>
                <tr class="h-6 border-b border-[#d4d4d4] bg-[#ffffdc]"><td class="border-r border-[#d4d4d4] pl-2"><svg class="mr-3 inline h-3 w-2 -translate-y-px"><use href="#right"/></svg>baseSize</td><td class="pl-[3px]">0 x 0</td></tr>
                <tr class="h-6 border-b border-[#d4d4d4] bg-[#ffffbf]"><td class="border-r border-[#d4d4d4] pl-7">palette</td><td class="pl-[3px]">Inherited</td></tr>
              </tbody>
            </table>
          </div>
          <div class="flex w-[21px] shrink-0 flex-col items-center bg-[#f0f0f0]">
            <span class="grid h-[21px] place-items-center"><svg class="h-2 w-3"><use href="#up"/></svg></span>
            <span class="h-[51px] w-[19px] bg-[#cdcdcd]"></span>
            <span class="mt-auto grid h-[21px] place-items-center"><svg class="h-2 w-3 rotate-180"><use href="#up"/></svg></span>
          </div>
        </div>
      </section>

      <section class="flex h-[188px] shrink-0 flex-col">
        <div class="flex h-6 shrink-0 items-center border border-[#b6b6b6] bg-[#dadada] pr-2 pl-1">
          <h2 class="flex-1">Resource Browser</h2>
          <button aria-label="Float"><svg class="size-3"><use href="#float"/></svg></button>
          <button class="ml-[15px]" aria-label="Close"><svg class="size-2.5"><use href="#x"/></svg></button>
        </div>
        <div class="flex h-[33px] shrink-0 items-center gap-[7px] pr-0.5 pl-[5px]">
          <button aria-label="Edit resources"><svg class="size-[22px]" viewBox="0 0 22 22"><path d="M1 21l2-5L17 2l3 3L6 19z" fill="#f2a92c" stroke="#b87c20" stroke-width=".8"/><path d="M4 17L17.500 3" stroke="#ffd98a" stroke-width="1.200"/><path d="M1 21l2-5 3 3z" fill="#f3dcb4" stroke="#a8804a" stroke-width=".8"/><path d="M1 21l1-2.500L3.500 20z" fill="#222"/><path d="M17 2l1.500-1.500q2.500-.5 3 3L20 5z" fill="#c76a52" stroke="#8c4a3a" stroke-width=".8"/></svg></button>
          <button aria-label="Reload"><svg class="size-[22px]" viewBox="0 0 22 22"><path d="M17.500 15.500A7.500 7.500 0 1 1 16 5.500" fill="none" stroke="#0f6a1e" stroke-width="6"/><path d="M17.500 15.500A7.500 7.500 0 1 1 16 5.500" fill="none" stroke="#3aa845" stroke-width="4.500"/><path d="M21 1v10H11z" fill="#3c9f4a" stroke="#0f6a1e"/></svg></button>
          <input type="text" aria-label="Filter resources" placeholder="Filter" class="ml-auto h-[21px] w-[187px] border border-[#7a7a7a] bg-white px-0.5 font-['Liberation_Mono',monospace] text-[13px] placeholder-[#808080]">
        </div>
        <div class="grid min-h-0 flex-1 grid-cols-2 gap-1.5">
          <div class="border border-[#828790] bg-white pt-px pl-[29px]">&lt;resource root&gt;</div>
          <div class="border border-[#828790] bg-white"></div>
        </div>
        <div class="flex h-[23px] shrink-0 items-start pl-0.5 font-['Liberation_Mono','Noto_Sans_CJK_SC',monospace] text-[13px]" role="tablist">
          <button role="tab" class="flex h-[21px] w-[162px] items-center justify-center border border-t-0 border-[#d9d9d9] pt-0.5 pr-1">Signal/Slot Ed<span lang="zh-CN" class="font-['Noto_Sans_CJK_SC',sans-serif]">…</span></button>
          <button role="tab" class="flex h-[21px] w-[122px] items-center justify-center border border-t-0 border-l-0 border-[#d9d9d9] pt-0.5 pr-1">Action Ed<span lang="zh-CN" class="font-['Noto_Sans_CJK_SC',sans-serif]">…</span></button>
          <button role="tab" aria-selected="true" class="flex h-[23px] flex-1 items-center justify-center border-b border-[#d9d9d9] bg-white pt-0.5 pr-1">Resource Bro<span lang="zh-CN" class="font-['Noto_Sans_CJK_SC',sans-serif]">…</span></button>
        </div>
      </section>
    </aside>
  </main>

  <!-- Status bar -->
  <footer class="flex h-[25px] shrink-0 items-end justify-end overflow-hidden pr-0.5">
    <span class="self-start font-['Liberation_Sans',sans-serif] text-[16px] leading-4 text-[#d8d8d8] [text-shadow:1px_1px_0_#fff]">https://blog.csdn.net/Enderman_xiaohei</span>
    <svg class="mb-0.5 -ml-2 size-3" viewBox="0 0 12 12"><path d="M8 0h3v3H8zM4 4h3v3H4zM8 4h3v3H8zM0 8h3v3H0zM4 8h3v3H4zM8 8h3v3H8z" fill="#bfbfbf"/></svg>
  </footer>
</div>
</body>
</html>
